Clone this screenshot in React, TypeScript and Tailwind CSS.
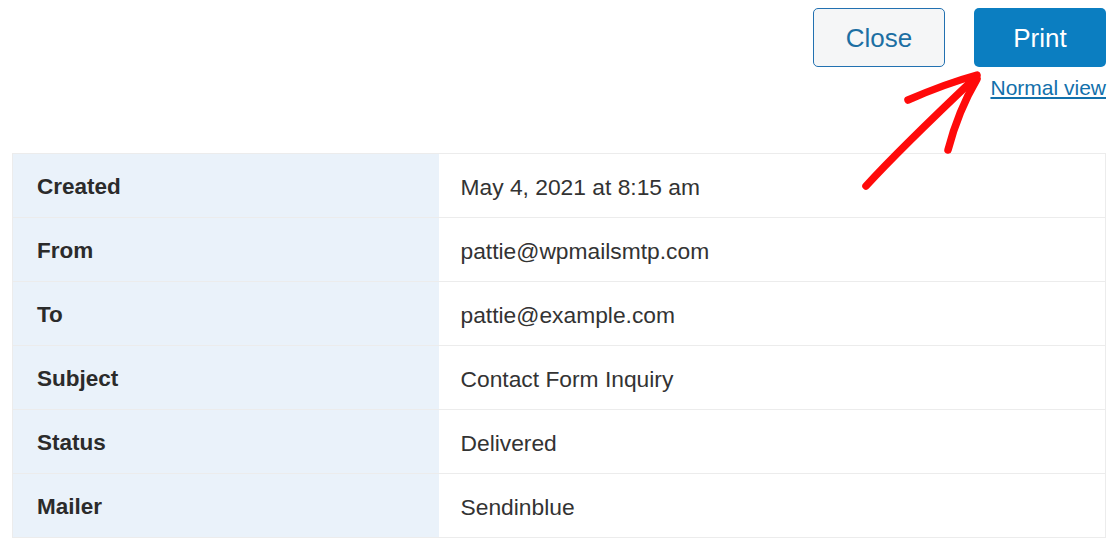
const rows: { label: string; value: string }[] = [
  { label: "Created", value: "May 4, 2021 at 8:15 am" },
  { label: "From", value: "pattie@wpmailsmtp.com" },
  { label: "To", value: "pattie@example.com" },
  { label: "Subject", value: "Contact Form Inquiry" },
  { label: "Status", value: "Delivered" },
  { label: "Mailer", value: "Sendinblue" },
];

function Arrow() {
  return (
    <svg
      className="absolute inset-0 pointer-events-none"
      width={1116}
      height={550}
      viewBox="0 0 1116 550"
      fill="none"
    >
      <g stroke="#ff0a0a" strokeWidth={7.5} strokeLinecap="round" strokeLinejoin="round">
        <path d="M866 186 C 898 151, 940 111, 976 77" />
        <path d="M908 100 C 931 90, 955 81, 977 75" />
        <path d="M948 150 C 954 127, 964 101, 977 79" />
      </g>
    </svg>
  );
}

export default function App() {
  return (
    <div
      className="relative w-[1116px] h-[550px] bg-white overflow-hidden pt-2 pl-3 pr-[10px]"
      style={{ fontFamily: '"Liberation Sans", Arial, sans-serif' }}
    >
      <div className="flex justify-end gap-[29px]">
        <button className="w-[132px] h-[59px] pt-[2px] rounded-[5px] border border-[#2271b1] bg-[#f5f6f7] text-[#1c6fa3] text-[26px]">
          Close
        </button>
        <button className="w-[132px] h-[59px] pt-[2px] rounded-[5px] bg-[#0b7ec1] text-white text-[26px]">
          Print
        </button>
      </div>
      <div className="flex justify-end mt-[8px]">
        <a href="#" className="text-[21px] leading-[26px] text-[#1270ab] underline underline-offset-2">
          Normal view
        </a>
      </div>

      <table className="mt-[52px] w-full border-collapse border border-[#ececec] text-[22.5px]">
        <tbody>
          {rows.map((r, i) => (
            <tr key={r.label} className={i < rows.length - 1 ? "border-b border-[#ececec]" : ""}>
              <td className="w-[426px] h-[64px] pt-[3px] bg-[#eaf2fa] pl-6 font-bold text-[#2b2b2b]">{r.label}</td>
              <td className="h-[64px] pt-[3px] pl-[22px] text-[#333333] text-[22.8px]">{r.value}</td>
            </tr>
          ))}
        </tbody>
      </table>

      <Arrow />
    </div>
  );
}
